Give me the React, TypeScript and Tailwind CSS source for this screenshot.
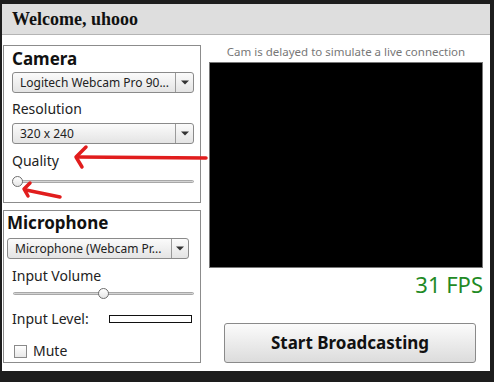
import React from "react";

const ui = { fontFamily: '"Noto Sans", "Open Sans", "DejaVu Sans", sans-serif' };

function Select({ label, w, sep }: { label: string; w: string; sep: string }) {
  return (
    <div
      className={`flex h-[21px] ${w} items-stretch rounded-[3px] border border-[#8a8a8a] bg-gradient-to-b from-[#fbfbfb] to-[#e4e4e4] text-[12px] text-[#222]`}
    >
      <div className={`flex ${sep} items-center border-r border-[#9a9a9a] pl-[7px] leading-none`}>{label}</div>
      <div className="flex flex-1 items-center justify-center">
        <svg width="8" height="5" viewBox="0 0 8 5">
          <path d="M0 0.5 L8 0.5 L4 4.5 Z" fill="#333" />
        </svg>
      </div>
    </div>
  );
}

function Slider({ pos }: { pos: number }) {
  return (
    <div className="relative h-[12px] w-[181px]">
      <div className="absolute left-0 right-0 top-[4px] h-[3px] rounded-full border border-[#a8a8a8] bg-[#d4d4d4]" />
      <div
        className="absolute top-0 h-[11px] w-[11px] rounded-full border border-[#6e6e6e] bg-gradient-to-b from-white to-[#e6e6e6]"
        style={{ left: pos }}
      />
    </div>
  );
}

export default function App() {
  return (
    <div className="relative h-[382px] w-[494px] bg-[#1d1d1d] pl-[2px] pt-[4px]" style={ui}>
      <div className="flex h-[367px] w-[488px] flex-col bg-white">
        <div className="flex h-[31px] items-center border-b border-[#b4b4b4] bg-[#dedede] pl-[10px]">
          <span
            className="text-[18px] font-bold text-[#111]"
            style={{ fontFamily: '"Liberation Serif", "Times New Roman", serif' }}
          >
            Welcome, uhooo
          </span>
        </div>
        <div className="flex flex-1 pt-[10px]">
          <div className="ml-[1px] flex w-[198px] flex-col gap-[7px]">
            <div className="flex h-[158px] flex-col border border-[#8c8c8c] pl-[8px] pt-[2px]">
              <div className="text-[17px] font-bold leading-[22px] text-[#111]">Camera</div>
              <div className="mt-[2px]">
                <Select label="Logitech Webcam Pro 90..." w="w-[182px]" sep="w-[163px]" />
              </div>
              <div className="mt-[7px] text-[14px] leading-[18px] text-[#222]">Resolution</div>
              <div className="mt-[5px]">
                <Select label="320 x 240" w="w-[182px]" sep="w-[163px]" />
              </div>
              <div className="mt-[8px] text-[14px] leading-[18px] text-[#222]">Quality</div>
              <div className="mt-[6px] pl-[1px]">
                <Slider pos={-1} />
              </div>
            </div>
            <div className="flex h-[153px] flex-col border border-[#8c8c8c] pl-[3px] pt-[1px]">
              <div className="text-[17px] font-bold leading-[22px] text-[#111]">Microphone</div>
              <div className="mt-[4px]">
                <Select label="Microphone (Webcam Pr..." w="w-[182px]" sep="w-[164px]" />
              </div>
              <div className="ml-[5px] mt-[8px] text-[14px] leading-[18px] text-[#222]">Input Volume</div>
              <div className="ml-[6px] mt-[3px]">
                <Slider pos={85} />
              </div>
              <div className="ml-[5px] mt-[10px] flex items-center">
                <span className="w-[97px] text-[14px] leading-[18px] text-[#222]">Input Level:</span>
                <div className="h-[8px] w-[83px] border border-[#111] bg-white" />
              </div>
              <div className="ml-[7px] mt-[14px] flex items-center gap-[6px]">
                <div className="h-[13px] w-[13px] border border-[#8a8a8a] bg-gradient-to-b from-white to-[#e8e8e8]" />
                <span className="text-[14px] leading-[18px] text-[#222]">Mute</span>
              </div>
            </div>
          </div>
          <div className="ml-[8px] flex w-[274px] flex-col">
            <div className="text-center text-[11.5px] leading-[14px] text-[#777]">
              Cam is delayed to simulate a live connection
            </div>
            <div className="mt-[3px] h-[206px] w-[274px] border border-[#777] bg-black" />
            <div className="mt-[3px] text-right text-[22px] leading-[26px] text-[#1f8a25]">31 FPS</div>
            <div className="ml-[15px] mt-[26px] flex h-[40px] w-[252px] items-center justify-center rounded-[3px] border border-[#8a8a8a] bg-gradient-to-b from-[#fbfbfb] to-[#dcdcdc] text-[17px] font-bold text-[#111]">
              Start Broadcasting
            </div>
          </div>
        </div>
      </div>
      <svg className="pointer-events-none absolute left-0 top-0" width="494" height="382">
        <g stroke="#e11d1d" strokeWidth="3.5" fill="none" strokeLinecap="round" strokeLinejoin="round">
          <path d="M206 158 L78 157" />
          <path d="M86 147 L76 157 L82 167" />
          <path d="M60 197 L26 190" />
          <path d="M30 183 L24 189 L28 196" />
        </g>
      </svg>
    </div>
  );
}
